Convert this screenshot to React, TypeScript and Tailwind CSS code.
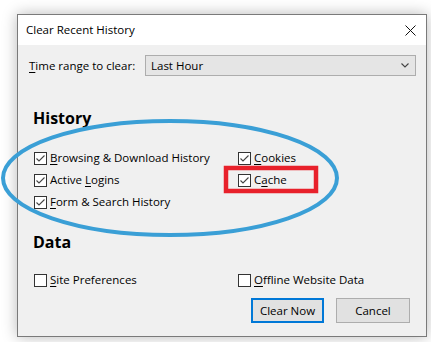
import React from 'react';

const font = { fontFamily: '"Open Sans", "Noto Sans", sans-serif' };

function Check({ checked, u, rest, pre = '' }: { checked: boolean; u: string; rest: string; pre?: string }) {
  return (
    <div className="flex items-center h-[22px] text-[11.5px] text-black">
      <span className="w-[13px] h-[13px] border border-[#333] bg-white flex items-center justify-center">
        {checked && (
          <svg width="11" height="11" viewBox="0 0 11 11">
            <path d="M1.5 5.5 L4 8 L9.5 2.5" fill="none" stroke="#444" strokeWidth="1.1" />
          </svg>
        )}
      </span>
      <span className="ml-[3px]">
        {pre}
        <span className="underline underline-offset-2">{u}</span>
        {rest}
      </span>
    </div>
  );
}

export default function App() {
  return (
    <div className="relative w-[431px] h-[342px] bg-white overflow-hidden" style={font}>
      <div className="pt-[14px] pl-[17px]">
        <div className="w-[410px] h-[323px] border border-[#7a7a7a] bg-[#f0f0f0] flex flex-col shadow-[0_0_14px_rgba(0,0,0,0.28)]">
          <div className="h-[30px] bg-white flex items-center justify-between pl-[8px] pr-[10px]">
            <span className="text-[11.5px] text-black">Clear Recent History</span>
            <svg width="11" height="11" viewBox="0 0 11 11">
              <path d="M0.5 0.5 L10.5 10.5 M10.5 0.5 L0.5 10.5" stroke="#111" strokeWidth="1" />
            </svg>
          </div>

          <div className="flex items-center mt-[10px] pl-[11px] pr-[10px]">
            <span className="w-[116px] text-[11.5px] text-black">
              <span className="underline underline-offset-2">T</span>ime range to clear:
            </span>
            <div className="flex-1 h-[21px] border border-[#adadad] bg-[#e5e5e5] flex items-center justify-between pl-[5px] pr-[6px] text-[11.5px] text-black">
              <span>Last Hour</span>
              <svg width="8" height="5" viewBox="0 0 8 5">
                <path d="M0.5 0.5 L4 4 L7.5 0.5" fill="none" stroke="#444" strokeWidth="1.1" />
              </svg>
            </div>
          </div>

          <div className="pl-[15px] mt-[32px] text-[16px] font-bold text-black leading-[20px]">History</div>

          <div className="pl-[16px] mt-[19px] flex">
            <div className="w-[204px]">
              <Check checked u="B" rest="rowsing & Download History" />
              <Check checked pre="Active " u="L" rest="ogins" />
              <Check checked u="F" rest="orm & Search History" />
            </div>
            <div>
              <Check checked u="C" rest="ookies" />
              <Check checked pre="C" u="a" rest="che" />
            </div>
          </div>

          <div className="pl-[15px] mt-[19px] text-[16px] font-bold text-black leading-[20px]">Data</div>

          <div className="pl-[16px] mt-[17px] flex">
            <div className="w-[204px]">
              <Check checked={false} u="S" rest="ite Preferences" />
            </div>
            <Check checked={false} u="O" rest="ffline Website Data" />
          </div>

          <div className="flex justify-end gap-[12px] pr-[16px] mt-[7px]">
            <button className="w-[73px] h-[25px] border-2 border-[#0078d7] bg-[#e1e1e1] text-[11.5px] text-black">Clear Now</button>
            <button className="w-[74px] h-[25px] border border-[#adadad] bg-[#e1e1e1] text-[11.5px] text-black">Cancel</button>
          </div>
        </div>
      </div>

      <svg className="absolute left-0 top-0 pointer-events-none" width="431" height="342" viewBox="0 0 431 342">
        <ellipse cx="170" cy="178" rx="167" ry="57" fill="none" stroke="#3a9fd6" strokeWidth="4" />
        <rect x="226" y="168" width="90" height="23" fill="none" stroke="#e8212b" strokeWidth="4.5" />
      </svg>
    </div>
  );
}
